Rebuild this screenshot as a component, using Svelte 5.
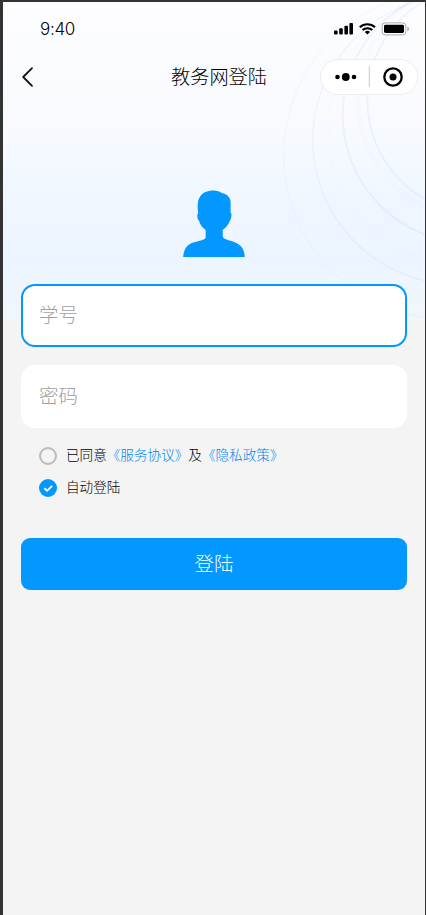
<script>
  let studentId = $state("");
  let password = $state("");
  let agreed = $state(false);
  let autoLogin = $state(true);

  const rings = [
    { cx: 444.5, cy: 153, r: 164, w: 1, opacity: 0.05 },
    { cx: 454.1, cy: 138, r: 144.4, w: 1.5, opacity: 0.06 },
    { cx: 467.7, cy: 113, r: 128, w: 1.8, opacity: 0.065 },
    { cx: 478.8, cy: 98, r: 114.5, w: 1.8, opacity: 0.07 },
    { cx: 475, cy: 98, r: 120, w: 5, opacity: 0.013 },
    { cx: 460, cy: 128, r: 135, w: 4, opacity: 0.008 },
  ];
</script>

<div class="phone">
  <svg class="rings" width="422" height="320" viewBox="0 0 422 320">
    <g fill="none" stroke="#2f7dff">
      {#each rings as ring}
        <circle cx={ring.cx} cy={ring.cy} r={ring.r} stroke-width={ring.w} stroke-opacity={ring.opacity} />
      {/each}
    </g>
  </svg>

  <header class="status">
    <span class="time">9:40</span>
    <svg width="78" height="16" viewBox="0 0 78 16">
      <g>
        <rect x="1" y="9.5" width="3.6" height="4" rx="1" />
        <rect x="6.2" y="7.3" width="3.6" height="6.2" rx="1" />
        <rect x="11.4" y="4.8" width="3.6" height="8.7" rx="1" />
        <rect x="16.4" y="2" width="3.6" height="11.5" rx="1" />
      </g>
      <g fill="none" stroke="#000" stroke-width="2.1">
        <path d="M26.8 6.2a11.2 11.2 0 0 1 15.2 0" />
        <path d="M29.5 9.1a7.2 7.2 0 0 1 9.8 0" />
      </g>
      <path d="M34.4 13.6l-2.6-2.6a3.7 3.7 0 0 1 5.2 0z" />
      <rect x="49.2" y="1.9" width="23.6" height="12" rx="3" fill="#fff" stroke="#aaa" />
      <rect x="51" y="3.8" width="20" height="8.2" rx="1.4" />
      <path d="M74.4 5.6c2.2 1 2.2 3.8 0 4.8z" fill="#aaa" />
    </svg>
  </header>

  <nav class="navbar">
    <button class="back" aria-label="返回">
      <svg width="14" height="22" viewBox="0 0 14 22">
        <path d="M11 2.2L2.2 11l8.8 8.8" fill="none" stroke="#111" stroke-width="1.8" stroke-linecap="round" stroke-linejoin="round" />
      </svg>
    </button>
    <h1>教务网登陆</h1>
    <div class="capsule">
      <svg width="96" height="34" viewBox="0 0 96 34">
        <circle cx="16.5" cy="17" r="2.3" />
        <circle cx="24.8" cy="17" r="3.9" />
        <circle cx="33" cy="17" r="2.3" />
        <path d="M48.3 6.2v21" stroke="#c8c8c8" stroke-width="1" />
        <circle cx="72" cy="17" r="8.7" fill="none" stroke="#000" stroke-width="2.3" />
        <circle cx="72" cy="17" r="3.5" />
      </svg>
    </div>
  </nav>

  <div class="avatar">
    <svg width="62" height="67" viewBox="0 0 62 67">
      <path
        d="M30.7.5C34 .5 37 1.500 38.700 3c3 .4 5.300 1.600 6.600 3.500 1.600 1.700 2.300 3.500 2.300 5.500v10.500c1.100 1 1.100 3.500.4 5.300-.2 1.500-.6 2.700-1.400 3.400-.5 1.600-1.400 3-2.300 4.300-1.300 1.800-2.900 3.300-4.600 4.500v6c0 2 2 3 5.600 4.200 4.700 1.100 7.500 2.400 10.200 4C59.500 56.500 61.500 61 61.800 67H.2c.3-6 2.300-10.500 6.300-12.800 2.700-1.600 6.500-2.200 10.500-3.400 3.600-1 5.700-1.800 5.700-3.800v-7c-2-1.500-3.500-3-4.900-5-.8-1.300-1.300-2.500-1.600-4.200-1.900-.8-2.600-6.300-1-7.800C14.700 20 14.500 17 14.700 15c.1-3.500.8-6.200 2.300-8.300C19.500 2.700 24 .5 30.700.5z"
        fill="#0398ff"
      />
    </svg>
  </div>

  <form class="login" onsubmit={(e) => e.preventDefault()}>
    <input class="field active" type="text" placeholder="学号" bind:value={studentId} />
    <input class="field" type="password" placeholder="密码" bind:value={password} />

    <div class="options">
      <label>
        <input type="checkbox" bind:checked={agreed} />
        <span class="tick" class:on={agreed}></span>
        <span class="text">已同意<a href="#service">《服务协议》</a>及<a href="#privacy">《隐私政策》</a></span>
      </label>
      <label>
        <input type="checkbox" bind:checked={autoLogin} />
        <span class="tick" class:on={autoLogin}>
          {#if autoLogin}
            <svg width="18" height="18" viewBox="0 0 18 18">
              <path d="M5.4 9.3l2.7 2.5 5-5" fill="none" stroke="#fff" stroke-width="1.9" />
            </svg>
          {/if}
        </span>
        <span class="text">自动登陆</span>
      </label>
    </div>

    <button class="submit" type="submit">登陆</button>
  </form>
</div>

<style>
  :global(body) {
    background: #333;
  }

  .phone {
    position: relative;
    box-sizing: border-box;
    width: 422px;
    height: 913px;
    margin: 2px 1px 0 3px;
    overflow: hidden;
    background: linear-gradient(180deg, #fdfdfe 0, #f8faff 120px, #eff6ff 210px, #ecf5ff 260px, #f2f6fa 320px) no-repeat 0 0 / 100% 320px, #f4f4f4;
    font-family: "Noto Sans CJK SC", sans-serif;
    font-weight: 300;
    display: flow-root;
  }

  .rings {
    position: absolute;
    top: 0;
    left: 0;
  }

  .status {
    position: relative;
    display: flex;
    justify-content: space-between;
    align-items: center;
    height: 53px;
    padding: 0 14px 0 37px;
  }

  .time {
    font-family: Inter, sans-serif;
    font-size: 17px;
    font-weight: 300;
    letter-spacing: -0.3px;
  }

  .navbar {
    position: relative;
    display: grid;
    grid-template-columns: 115px 1fr 115px;
    align-items: center;
    height: 44px;
  }

  .back {
    display: flex;
    width: 14px;
    padding: 0;
    margin-left: 18px;
    border: 0;
    background: none;
  }

  h1 {
    margin: 0 -10px 2px 0;
    font-size: 19.2px;
    line-height: 28px;
    font-weight: 300;
    text-align: center;
    color: #000;
  }

  .capsule {
    display: flex;
    justify-self: end;
    width: 96px;
    margin-right: 7px;
    border: 1px solid #eeeeef;
    border-radius: 18px;
    background: #fff;
  }

  .avatar {
    position: relative;
    display: flex;
    justify-content: center;
    padding: 91px 0 27px;
  }

  .login {
    position: relative;
    display: flex;
    flex-direction: column;
    gap: 18px;
    margin: 0 18px;
  }

  .field {
    box-sizing: border-box;
    width: 386px;
    height: 63px;
    padding: 0 16px 4px;
    border: 2px solid #fff;
    border-radius: 14px;
    outline: none;
    background: #fff;
    font: inherit;
    font-size: 19.5px;
    color: #222;
  }

  .field.active {
    border-color: #0398ff;
  }

  .field::placeholder {
    color: #a0a0a0;
    opacity: 1;
  }

  .options {
    display: flex;
    flex-direction: column;
    gap: 12px;
    padding-left: 18px;
  }

  label {
    display: flex;
    align-items: center;
    gap: 9px;
    height: 20px;
    font-size: 13.6px;
    color: #000;
  }

  label input {
    display: none;
  }

  .text {
    padding-bottom: 4px;
  }

  .tick {
    box-sizing: border-box;
    display: flex;
    width: 18px;
    height: 18px;
    border: 2px solid #bbb;
    border-radius: 50%;
  }

  .tick.on {
    border: 0;
    background: #0398ff;
  }

  a {
    color: #0085ee;
    text-decoration: none;
  }

  .submit {
    width: 386px;
    height: 52px;
    margin-top: 22px;
    padding: 0 0 4px;
    border: 0;
    border-radius: 9px;
    background: #0398ff;
    font: inherit;
    font-size: 19.5px;
    color: #fff;
  }
</style>
